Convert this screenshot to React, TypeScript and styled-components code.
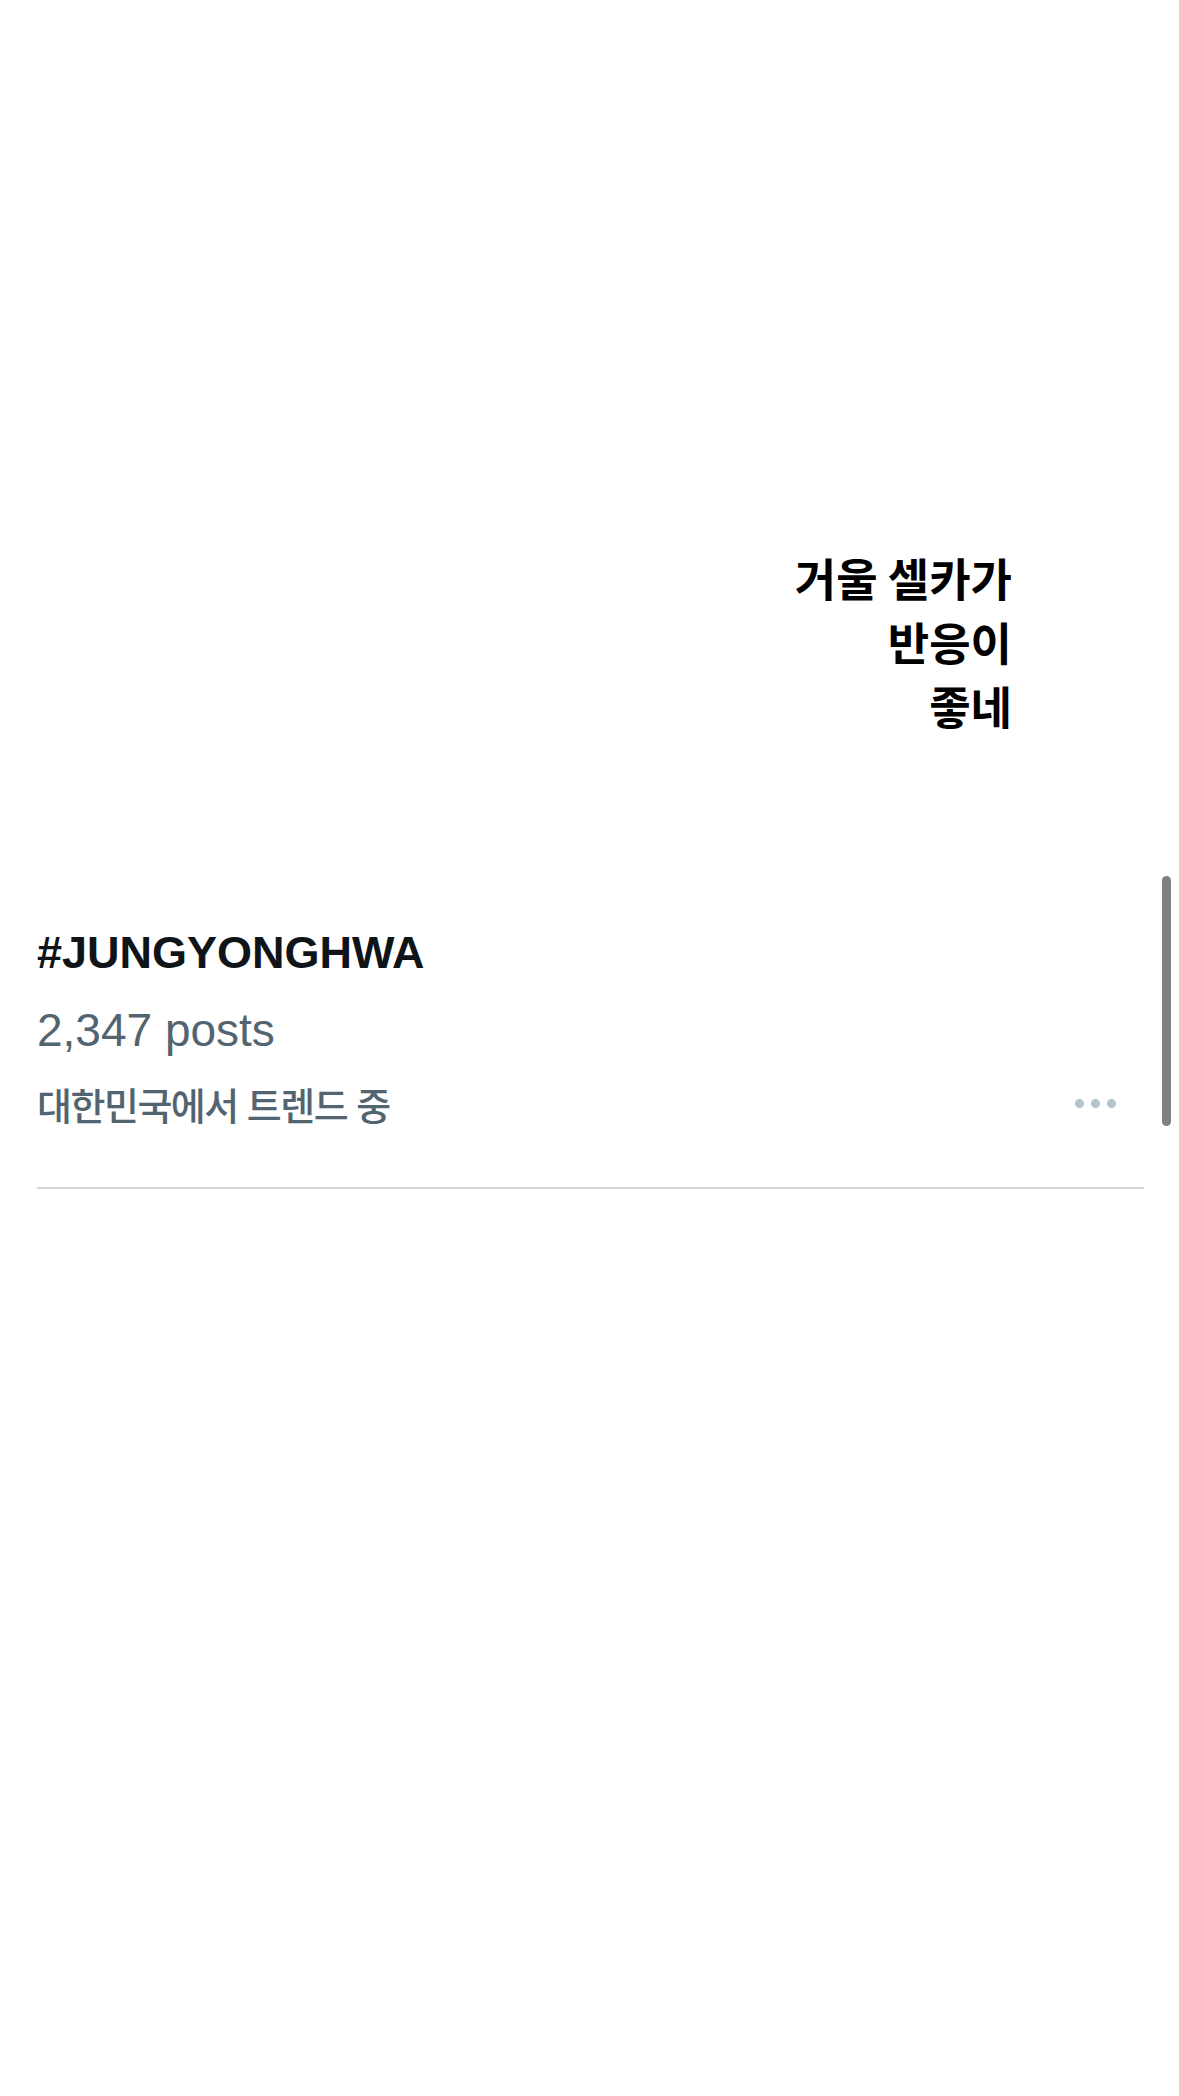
import styled, { createGlobalStyle } from "styled-components"

const GlobalStyle = createGlobalStyle`
    body {
        margin: 0;
        background: #ffffff;
        font-family: "Liberation Sans", "Noto Sans CJK KR", sans-serif;
    }
`

const Page = styled.div`
    width: 1179px;
    min-height: 2096px;
    background: #ffffff;
    display: flex;
    flex-direction: column;
`

const Hero = styled.div`
    height: 876px;
    box-sizing: border-box;
    display: flex;
    flex-direction: column;
    align-items: flex-end;
    padding: 546px 167px 0 0;
`

const Caption = styled.p`
    margin: 0;
    text-align: right;
    font-family: "Noto Sans CJK KR", sans-serif;
    font-weight: 700;
    font-size: 45px;
    line-height: 64px;
    color: #000000;
`

const TrendCard = styled.section`
    position: relative;
    padding: 51px 35px 0 37px;
    display: flex;
    flex-direction: column;
`

const Hashtag = styled.h2`
    margin: 0;
    font-family: "Liberation Sans", sans-serif;
    font-weight: 700;
    font-size: 45px;
    line-height: 52px;
    color: #0f1419;
`

const PostCount = styled.p`
    margin: 25px 0 0;
    font-family: "Liberation Sans", sans-serif;
    font-size: 46px;
    line-height: 52px;
    color: #536471;
`

const MetaRow = styled.div`
    margin-top: 22px;
    height: 50px;
    display: flex;
    align-items: center;
    justify-content: space-between;
`

const Location = styled.span`
    font-family: "Noto Sans CJK KR", sans-serif;
    font-size: 38px;
    font-weight: 500;
    letter-spacing: -1.5px;
    word-spacing: 2px;
    color: #536471;
`

const MoreButton = styled.button`
    border: none;
    background: transparent;
    padding: 0 28px 0 0;
    display: flex;
    gap: 7px;
    cursor: pointer;
`

const Dot = styled.span`
    width: 9px;
    height: 9px;
    border-radius: 50%;
    background: #b6c3ca;
`

const Divider = styled.hr`
    margin: 59px 0 0;
    border: none;
    height: 2px;
    background: #d6d6d6;
`

const ScrollThumb = styled.div`
    position: absolute;
    top: 0;
    right: 8px;
    width: 9px;
    height: 250px;
    border-radius: 5px;
    background: #808080;
`

export default function App() {
    return (
        <>
            <GlobalStyle />
            <Page>
                <Hero>
                    <Caption>
                        거울 셀카가<br />
                        반응이<br />
                        좋네
                    </Caption>
                </Hero>

                <TrendCard>
                    <Hashtag>#JUNGYONGHWA</Hashtag>
                    <PostCount>2,347 posts</PostCount>
                    <MetaRow>
                        <Location>대한민국에서 트렌드 중</Location>
                        <MoreButton aria-label="More">
                            <Dot />
                            <Dot />
                            <Dot />
                        </MoreButton>
                    </MetaRow>
                    <Divider />
                    <ScrollThumb />
                </TrendCard>
            </Page>
        </>
    )
}
